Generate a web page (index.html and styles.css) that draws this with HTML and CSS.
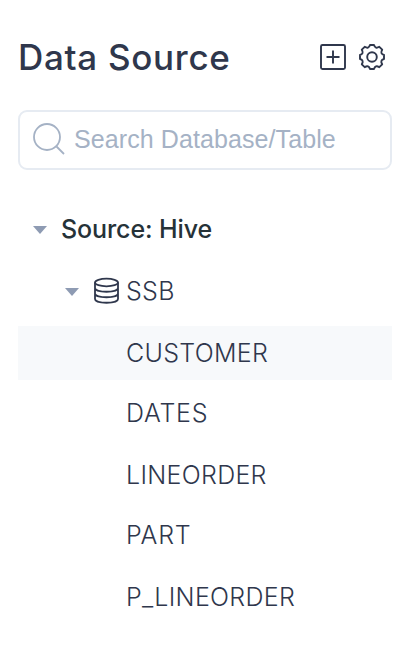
FILE: index.html
```html
<!DOCTYPE html>
<html lang="en">
<head>
<meta charset="utf-8">
<title>Data Source</title>
<link rel="stylesheet" href="styles.css">
</head>
<body>
<aside class="panel">
  <header class="header">
    <h1 class="title">Data Source</h1>
    <svg class="icon" viewBox="0 0 28 28"><rect x="2" y="2" width="24" height="24" rx="1.5"/><path d="M14 7.500v13M7.500 14h13"/></svg>
    <svg class="icon gear" viewBox="0 0 28 28"><path d="M12 2h4Q17.300 6.300 21.300 3.800L24.200 6.700Q21.700 10.700 26 12V16Q21.700 17.300 24.200 21.300L21.300 24.200Q17.300 21.700 16 26H12Q10.700 21.700 6.700 24.200L3.800 21.300Q6.300 17.300 2 16V12Q6.300 10.700 3.800 6.700L6.700 3.800Q10.700 6.300 12 2z"/><circle cx="14" cy="14" r="4.800"/></svg>
  </header>
  <div class="search">
    <svg class="lens" viewBox="0 0 34 34"><circle cx="15" cy="15" r="13"/><path d="M24.500 24.500l7.500 7.500"/></svg>
    <span class="hint">Search Database/Table</span>
  </div>
  <ul class="tree">
    <li class="row source"><i class="caret"></i><span>Source: Hive</span></li>
    <li class="row database"><i class="caret"></i><svg class="db" viewBox="0 0 26 28"><ellipse cx="13.500" cy="5.500" rx="11.500" ry="3.800"/><path d="M2 5.500v16.500c0 5 23 5 23 0V5.500M2 11c0 5 23 5 23 0M2 16.500c0 5 23 5 23 0"/></svg><span>SSB</span></li>
    <li class="row table selected">CUSTOMER</li>
    <li class="row table dates">DATES</li>
    <li class="row table">LINEORDER</li>
    <li class="row table part">PART</li>
    <li class="row table">P_LINEORDER</li>
  </ul>
</aside>
</body>
</html>
```
FILE: styles.css
```css
* { box-sizing: border-box; }
body { margin: 0; background: #fff; color: #2f374c; font-family: Inter, "Liberation Sans", sans-serif; }
.panel { width: 406px; height: 658px; padding: 30px 14px 0 18px; }
.header { display: flex; align-items: center; height: 54px; }
.title { flex: 1; margin: 0; font-size: 35px; font-weight: 500; letter-spacing: 0.7px; white-space: nowrap; }
.icon { width: 28px; height: 28px; fill: none; stroke: #2f374c; stroke-width: 1.9; stroke-linejoin: round; }
.gear { margin: 0 6px 0 11px; }
.search { display: flex; align-items: center; height: 60px; margin-top: 26px; padding-left: 12px; border: 2px solid #e6ebf2; border-radius: 9px; color: #a5b2c5; font: 25px "Liberation Sans", sans-serif; letter-spacing: 0.09px; }
.lens { width: 34px; height: 34px; margin: -2px 8px 0 0; fill: none; stroke: #a5b2c5; stroke-width: 1.8; }
.hint { margin-top: -1px; }
.tree { list-style: none; margin: 32px 0 0; padding: 0; font-size: 25px; }
.row { display: flex; align-items: center; height: 54px; margin-bottom: 8px; white-space: nowrap; }
.source { padding-left: 15px; color: #263238; font-weight: 500; letter-spacing: -0.1px; }
.database { padding-left: 47px; font-weight: 330; letter-spacing: 0.3px; }
.table { padding-left: 108px; font-weight: 330; letter-spacing: 0.3px; }
.table:nth-child(odd) { margin-bottom: 6px; }
.dates, .part { letter-spacing: 0.75px; }
.selected { background: #f7f9fb; }
.caret { width: 14px; height: 8px; margin: 2px 14px 0 0; background: #8e9bb3; clip-path: polygon(0 0, 100% 0, 50% 100%); }
.db { width: 26px; height: 28px; margin-right: 7px; fill: none; stroke: #2f374c; stroke-width: 1.8; }
```
